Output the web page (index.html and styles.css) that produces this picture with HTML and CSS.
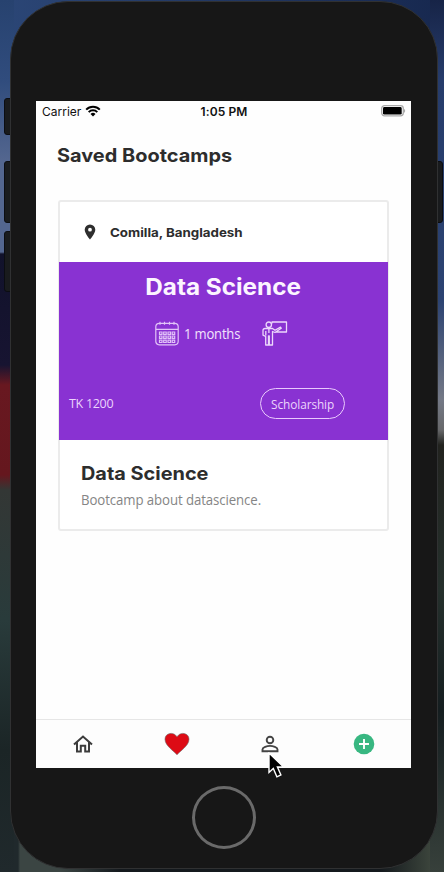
FILE: index.html
```html
<!DOCTYPE html>
<html lang="en">
<head>
<meta charset="utf-8">
<title>Saved Bootcamps</title>
<link rel="stylesheet" href="styles.css">
</head>
<body>
<div class="desktop">
  <i class="key key-mute"></i><i class="key key-up"></i><i class="key key-down"></i><i class="key key-power"></i>
  <div class="phone">
    <main class="screen">
      <div class="status">
        <div class="carrier"><span>Carrier</span>
          <svg width="16" height="12" viewBox="0 0 16 12"><path d="M1.2 4.600a9.600 9.600 0 0 1 13.600 0M3.700 7.100a6.100 6.100 0 0 1 8.600 0" fill="none" stroke="#000" stroke-width="2"/><path d="M5.500 9a3.600 3.600 0 0 1 5 0L8 11.600z"/></svg>
        </div>
        <time class="clock">1:05 PM</time>
        <svg class="battery" width="25" height="12" viewBox="0 0 25 12"><rect x=".7" y=".7" width="21.600" height="10.200" rx="2.800" fill="#fff" stroke="#aaa" stroke-width="1.300"/><rect x="2" y="2" width="18.700" height="7.600" rx="1.400"/><path d="M23 4c1.500.3 1.500 3.400 0 3.800z" fill="#aaa"/></svg>
      </div>
      <h1 class="title"><span>Saved Bootcamps</span></h1>
      <article class="card">
        <div class="place">
          <svg width="12" height="16" viewBox="0 0 12 16"><path fill-rule="evenodd" d="M6 .4A5.300 5.300 0 0 0 .7 5.700C.7 9.500 6 15.400 6 15.400s5.300-5.900 5.300-9.700A5.300 5.300 0 0 0 6 .4zm0 3.400a1.900 1.900 0 1 1 0 3.800 1.900 1.900 0 0 1 0-3.800z" fill="#2e2e2e"/></svg>
          <span class="place-name">Comilla, Bangladesh</span>
        </div>
        <section class="banner">
          <h2 class="course"><span>Data Science</span></h2>
          <div class="facts">
            <svg width="24" height="25" viewBox="0 0 24 25" fill="none" stroke="#e2c3f8" stroke-width="1.200"><rect x=".8" y="2.300" width="22.400" height="21.500" rx="3.500"/><path d="M1 8.300h22M5 .8v3M9.500.8v3M14.500.8v3M19 .8v3"/><path d="M4.500 11H7v2.300H4.500zM8.700 11h2.500v2.300H8.700zM13 11h2.500v2.300H13zM17.200 11h2.500v2.300h-2.500zM4.500 15H7v2.300H4.500zM8.700 15h2.500v2.300H8.700zM13 15h2.500v2.300H13zM17.200 15h2.500v2.300h-2.500zM4.500 19.200H7v2.300H4.500zM8.700 19.200h2.500v2.300H8.700zM13 19.200h2.500v2.300H13zM17.200 19.200h2.500v2.300h-2.500z"/></svg>
            <span class="months">1 months</span>
            <svg class="teacher" width="26" height="25" viewBox="0 0 26 25" fill="none" stroke="#ecd7fb" stroke-width="1.300" stroke-linejoin="round"><circle cx="6.800" cy="3.700" r="2.700"/><path d="M10 2.500V1h14.500v10H14M3.200 7.500h7.300l2.500 1.800 5.500-3.200.8 1.200-6.300 4.200-2.500-1V24H7.300v-9h-.8v9H3.700v-8.500L1 14.200v-4.700q0-2 2.200-2M3.800 10v4.500M6.900 8v4"/></svg>
          </div>
          <div class="price-row">
            <span class="price">TK 1200</span>
            <span class="pill"><span>Scholarship</span></span>
          </div>
        </section>
        <div class="about">
          <h3 class="name"><span>Data Science</span></h3>
          <p class="desc"><span>Bootcamp about datascience.</span></p>
        </div>
      </article>
      <nav class="tabs">
        <a><svg width="20" height="18" viewBox="0 0 20 18"><path d="M1 9.500 10 1.500l9 8M4 7.500v9h3.800v-5.800h4.400v5.800H16v-9" fill="none" stroke="#3c3c3c" stroke-width="2"/></svg></a>
        <a><svg width="26" height="24" viewBox="0 0 26 24"><path d="M13 22.800C10 19 1 13.800 1 7.200 1 .8 9.800-.8 13 4.800 16.200-.8 25 .8 25 7.200c0 6.600-9 11.800-12 15.600z" fill="#dd0b15" stroke="#6f6565" stroke-width=".6"/></svg></a>
        <a><svg width="18" height="18" viewBox="0 0 18 18" fill="none" stroke="#444" stroke-width="1.900"><circle cx="9" cy="5" r="3.300"/><path d="M1.500 16.300v-1.800c0-2.300 4.600-3.600 7.500-3.600s7.500 1.300 7.500 3.600v1.800z"/></svg></a>
        <a><svg width="22" height="22" viewBox="0 0 22 22"><circle cx="11" cy="11" r="10.300" fill="#38b781"/><path d="M11 6v10M6 11h10" stroke="#fff" stroke-width="1.900"/></svg></a>
      </nav>
    </main>
    <div class="home"></div>
  </div>
  <svg class="pointer" width="18" height="27" viewBox="0 0 18 27"><path d="M1 1v19.500l4.300-4 3.600 8.300 4-1.800-3.500-8h6.200z" fill="#000" stroke="#fff" stroke-width="1.400"/></svg>
</div>
</body>
</html>
```
FILE: styles.css
```css
* { box-sizing: border-box; }
body { margin: 0; font-family: "Open Sans", sans-serif; }
h1, h2, h3, p { margin: 0; }
svg { display: block; flex: none; }
.desktop {
  position: relative; width: 444px; height: 872px; overflow: hidden; padding: 1px 7px 3px 10px;
  background:
    linear-gradient(#27426f 0, #304c7d 80px, #53668f 160px, #53668f 252px, #11122b 254px, #171431 365px, #681820 385px, #65171e 475px, #333735 490px, #293b3b 620px, #1b2526 750px, #20292c 872px) left / 14px 100% no-repeat,
    linear-gradient(#172447 0, #263c6b 80px, #2c4372 300px, #747986 400px, #67686a 430px, #22231f 445px, #25302c 590px, #151e20 710px, #37403b 872px) right / 14px 100% no-repeat,
    linear-gradient(90deg, #2b4676, #17284f) top / 100% 60px no-repeat,
    linear-gradient(90deg, #20292c 0 18px, #3b4543 20px 60px, #14191d 120px 380px, #465044) bottom / 100% 60px no-repeat,
    #171717;
}
.key { position: absolute; left: 4px; width: 10px; background: #191b1d; border: 1px solid #0b0d12; border-radius: 3px; }
.key-mute { top: 98px; height: 37px; }
.key-up { top: 161px; height: 62px; }
.key-down { top: 231px; height: 61px; }
.key-power { top: 161px; height: 62px; left: 433px; }
.phone {
  position: relative; height: 868px; width: 428px; padding: 99px 26px 0 25px; border: 1px solid #303132; border-radius: 58px;
  background: #171717; display: flex; flex-direction: column; align-items: center;
}
.screen { width: 375px; height: 667px; background: #fefefe; display: flex; flex-direction: column; flex: none; }
.status { height: 20px; padding: 0 5px 0 6px; display: grid; grid-template-columns: 1fr auto 1fr; align-items: center; font: 12px Inter, sans-serif; color: #111; }
.carrier { display: flex; align-items: center; gap: 4px; letter-spacing: 0; }
.clock { font-weight: 600; letter-spacing: .1px; }
.battery { justify-self: end; }
.title, .course, .name, .place-name { font-family: Inter, sans-serif; font-weight: 700; color: #2d2d2d; white-space: nowrap; }
.title span, .name span, .place-name, .months, .desc span { display: inline-block; transform-origin: left; }
.title span { transform: scaleX(1.077); }
.title { padding: 22px 21px 0; font-size: 18.500px; line-height: 24px; }
.card { margin: 33px 22px 0; height: 331px; border: 2px solid #ebebeb; border-radius: 3px; background: #fff; display: flex; flex-direction: column; }
.place { height: 60px; flex: none; padding-left: 24px; display: flex; align-items: center; gap: 14px; }
.place-name { font-size: 12.400px; transform: scaleX(1.075); }
.banner { height: 178px; flex: none; background: #8932d2; margin: 0 -1px; display: flex; flex-direction: column; }
.course { text-align: center; padding-top: 10px; line-height: 30px; font-size: 22.500px; color: #fcf5ff; }
.course span { display: inline-block; transform: scaleX(1.08); }
.facts { display: flex; align-items: center; padding-left: 96px; height: 25px; margin-top: 19px; color: #f2e3fc; }
.months { margin-left: 5px; width: 57px; font-size: 14.500px; transform: scaleX(.9); letter-spacing: -.2px; white-space: nowrap; }
.teacher { margin-left: 21px; }
.price-row { margin-top: 42px; padding: 0 43px 0 10px; display: flex; justify-content: space-between; align-items: center; height: 31px; color: #ecd4fc; }
.price { font-size: 12.500px; letter-spacing: -.3px; }
.pill { width: 85px; height: 31px; border: 1px solid #e9cafc; border-radius: 16px; display: flex; align-items: center; justify-content: center; font-size: 13px; }
.pill span { transform: scaleX(.91); letter-spacing: -.1px; }
.about { padding: 20px 21px 0; }
.name { font-size: 18.500px; line-height: 26px; }
.name span { transform: scaleX(1.075); }
.desc { font-size: 14.500px; line-height: 20px; margin-top: 4px; color: #858585; white-space: nowrap; }
.desc span { transform: scaleX(.912); letter-spacing: -.1px; }
.tabs { margin-top: auto; height: 49px; border-top: 1px solid #e6e6e6; display: grid; grid-template-columns: repeat(4, 1fr); background: #fdfdfd; }
.tabs a { display: flex; align-items: center; justify-content: center; }
.home { width: 64px; height: 63px; margin-top: 18px; flex: none; border: 3px solid #6a6a6a; border-radius: 50%; }
.pointer { position: absolute; left: 268px; top: 752px; }
```
